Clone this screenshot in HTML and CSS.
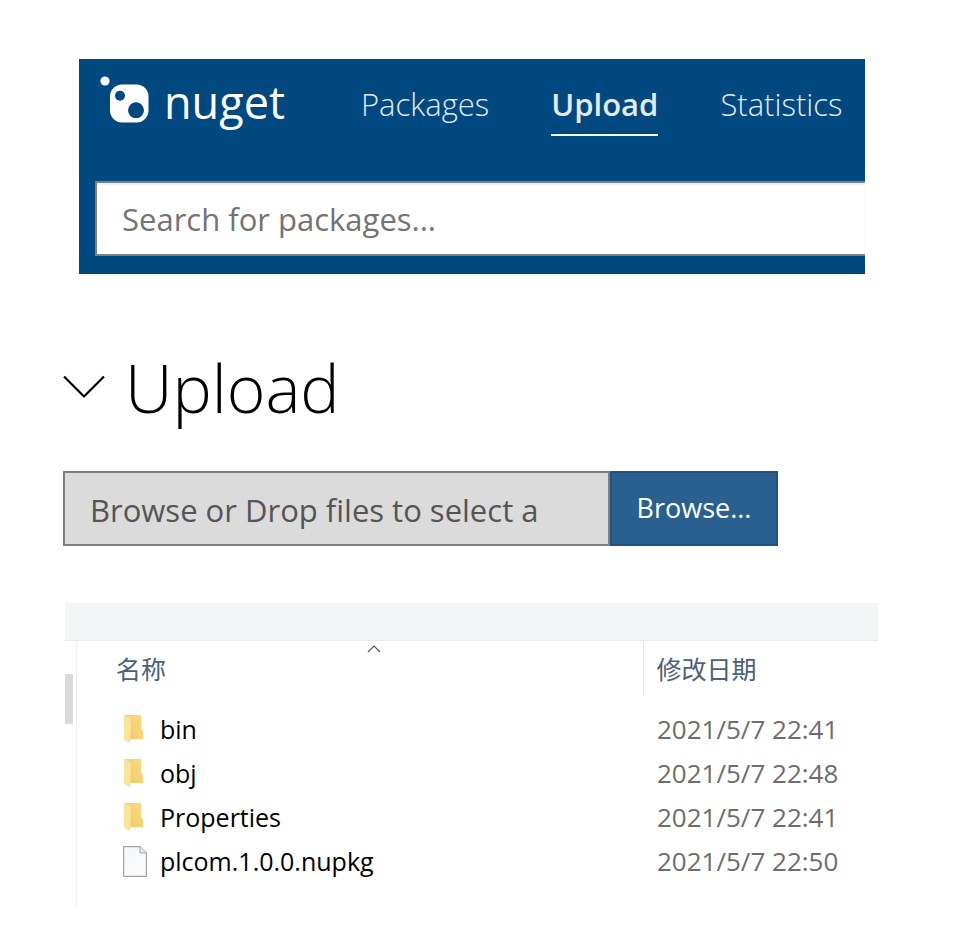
FILE: index.html
```html
<!DOCTYPE html>
<html lang="zh-CN">
<head>
<meta charset="utf-8">
<meta name="viewport" content="width=device-width, initial-scale=1">
<title>NuGet Upload</title>
<link rel="stylesheet" href="styles.css">
</head>
<body>
<svg class="defs" aria-hidden="true">
  <defs>
    <linearGradient id="flap" x1="0" y1="0" x2="1" y2="1"><stop offset="0" stop-color="#fbe29a"/><stop offset="1" stop-color="#ffe699"/></linearGradient>
    <linearGradient id="back" x1="0" y1="1" x2="1" y2="0"><stop offset="0" stop-color="#eac765"/><stop offset="1" stop-color="#fbdc82"/></linearGradient>
    <linearGradient id="paper" x1="0" y1="0" x2="1" y2="1"><stop offset="0" stop-color="#f4f6f7"/><stop offset="1" stop-color="#fdfdfd"/></linearGradient>
    <symbol id="folder" viewBox="0 0 24 30">
      <path d="M1 1H18.300V15L20.300 18V25H7V28L1 25.500Z" fill="url(#back)"/>
      <path d="M1 1L7.500 4.500V24L6.500 25V29L1 25.500Z" fill="url(#flap)"/>
    </symbol>
  </defs>
</svg>
<header class="site-header">
  <nav class="site-nav">
    <a class="brand" href="#">
      <svg class="brand-mark" viewBox="0 0 50 50" aria-hidden="true">
        <circle cx="5" cy="6" r="4.600" fill="#fff"/>
        <rect x="10" y="9.500" width="38.500" height="38" rx="12" fill="#fff"/>
        <circle cx="20" cy="20.700" r="5" fill="#004880"/>
        <circle cx="36" cy="35.300" r="8" fill="#004880"/>
      </svg>
      <span class="brand-name">nuget</span>
    </a>
    <a class="nav-link" href="#">Packages</a>
    <a class="nav-link current" href="#" aria-current="page">Upload</a>
    <a class="nav-link" href="#">Statistics</a>
  </nav>
  <input class="search" type="text" placeholder="Search for packages..." aria-label="Search for packages">
</header>
<main>
  <h1 class="title">
    <svg class="chevron" viewBox="0 0 42 24" aria-hidden="true"><path d="M1 1.500L21 21.500L41 1.500" fill="none" stroke="#000" stroke-width="2.200"/></svg>
    <span>Upload</span>
  </h1>
  <form class="upload">
    <input class="upload-path" type="text" readonly value="Browse or Drop files to select a package" aria-label="Package file">
    <button class="browse" type="button">Browse...</button>
  </form>
  <section class="explorer">
    <div class="toolbar"></div>
    <div class="panes">
      <div class="tree"><div class="thumb"></div></div>
      <table class="files">
        <thead>
          <tr>
            <th class="name">名称<svg class="sort" viewBox="0 0 14 8" aria-hidden="true"><path d="M1 7L7 1L13 7" fill="none" stroke="#555" stroke-width="1.200"/></svg></th>
            <th class="date">修改日期</th>
          </tr>
        </thead>
        <tbody>
          <tr><td><div class="file"><svg class="folder" aria-hidden="true"><use href="#folder"/></svg>bin</div></td><td class="when">2021/5/7 22:41</td></tr>
          <tr><td><div class="file"><svg class="folder" aria-hidden="true"><use href="#folder"/></svg>obj</div></td><td class="when">2021/5/7 22:48</td></tr>
          <tr><td><div class="file"><svg class="folder" aria-hidden="true"><use href="#folder"/></svg>Properties</div></td><td class="when">2021/5/7 22:41</td></tr>
          <tr><td><div class="file"><svg class="paper" viewBox="0 0 24 31" aria-hidden="true"><path d="M.6 .6H17L23.400 7V30.400H.6Z" fill="url(#paper)" stroke="#a3a3a3" stroke-width="1.200"/><path d="M17 .6V7H23.400" fill="#e9ebec" stroke="#a3a3a3"/></svg>plcom.1.0.0.nupkg</div></td><td class="when">2021/5/7 22:50</td></tr>
        </tbody>
      </table>
    </div>
  </section>
</main>
</body>
</html>
```
FILE: styles.css
```css
* { box-sizing: border-box; }

body {
  margin: 0;
  background: #fff;
  color: #000;
  font-family: "Open Sans", "Noto Sans", "Noto Sans CJK SC", sans-serif;
}

.defs { position: absolute; width: 0; height: 0; }

a { color: inherit; text-decoration: none; }

.site-header {
  margin: 59px 112px 0 79px;
  padding: 16px 0 18px 16px;
  background: #004880;
  color: #e3ebf1;
}

.site-nav {
  display: flex;
  align-items: flex-start;
  gap: 62px;
  padding-left: 5px;
}

.brand {
  display: flex;
  gap: 14px;
  margin-right: 14px;
  color: #fff;
}
.brand-mark { width: 50px; height: 50px; }
.brand-name { font-size: 45px; font-weight: 500; line-height: 54px; }

.nav-link {
  padding: 7px 0 8px;
  border-bottom: 2px solid transparent;
  font-size: 31px;
  font-weight: 300;
  line-height: 44px;
}
.nav-link.current {
  border-color: #fff;
  font-weight: 600;
}

.search {
  display: block;
  width: 100%;
  height: 75px;
  margin-top: 45px;
  padding: 0 25px;
  border: 2px solid #808080;
  border-right: 0;
  border-radius: 0;
  background: #fff;
  box-shadow: inset 0 2px 2px #eee;
  font: 31px "Open Sans", sans-serif;
}
.search::placeholder { color: #737373; opacity: 1; }

.title {
  display: flex;
  align-items: center;
  gap: 20px;
  margin: 69px 0 0 63px;
  font-size: 66px;
  font-weight: 300;
  line-height: 88px;
}
.chevron { width: 42px; height: 24px; }

.upload {
  display: flex;
  margin: 40px 199px 0 63px;
}
.upload-path {
  flex: 1;
  min-width: 0;
  height: 75px;
  padding: 2px 71px 0 25px;
  border: 2px solid #808080;
  border-radius: 0;
  background: #dbdbdb;
  color: #555;
  font: 31px "Open Sans", sans-serif;
  font-variant-ligatures: none;
}
.browse {
  width: 168px;
  padding: 0 0 3px;
  border: 2px solid #1f5482;
  background: #2a608f;
  color: #fff;
  font: 27px "Open Sans", sans-serif;
}

.explorer { margin: 57px 99px 0 65px; }
.toolbar {
  height: 38px;
  border-bottom: 1px solid #e6e9eb;
  background: #f4f5f7;
}
.panes { display: flex; }
.tree {
  width: 12px;
  padding-top: 33px;
  border-right: 1px solid #f0f0f0;
}
.thumb { width: 8px; height: 50px; background: #d9d9d9; }

.files {
  flex: 1;
  border-collapse: collapse;
  margin-bottom: 25px;
}
.files th {
  position: relative;
  height: 54px;
  padding: 0;
  color: #4c607a;
  font: 25px "Noto Sans CJK SC", sans-serif;
  text-align: left;
}
.files .name { padding-left: 39px; }
.files .date {
  width: 235px;
  padding-left: 13px;
  border-left: 1px solid #e5e5e5;
}
.sort {
  position: absolute;
  top: 4px;
  left: 290px;
  width: 14px;
  height: 8px;
}
.files tbody::before { content: ""; display: block; height: 12px; }
.files td {
  height: 44px;
  padding: 0;
  font-size: 25px;
  line-height: 44px;
}
.file {
  display: flex;
  align-items: center;
  gap: 13px;
  padding-left: 46px;
}
.folder { width: 24px; height: 30px; }
.paper { width: 24px; height: 31px; }
.files .when { padding-left: 14px; color: #6d6d6d; font-size: 26px; }
```
